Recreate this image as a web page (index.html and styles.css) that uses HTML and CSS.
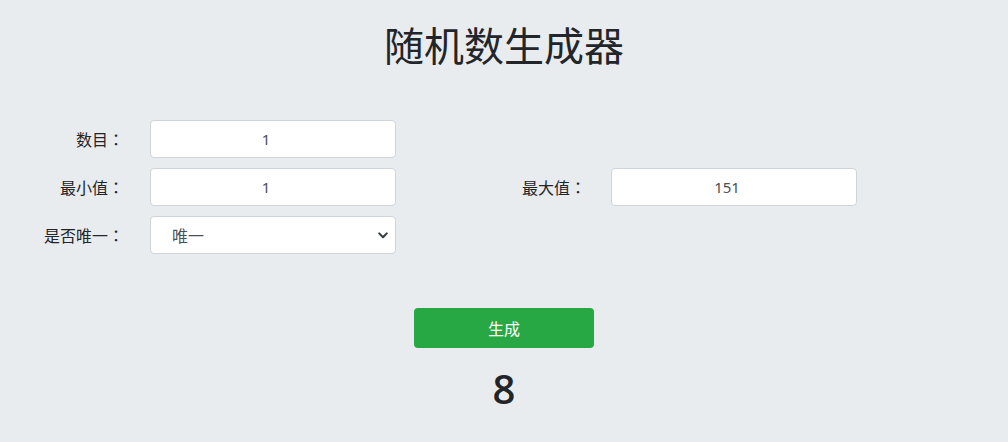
FILE: index.html
```html
<!DOCTYPE html>
<html lang="zh-CN">
<head>
<meta charset="utf-8">
<title>随机数生成器</title>
<link rel="stylesheet" href="styles.css">
</head>
<body>
  <main class="page">
    <h1 class="title">随机数生成器</h1>
    <form class="form-grid">
      <label class="label label-left" for="count">数目<span class="colon">：</span></label>
      <input class="field num" id="count" type="text" value="1">
      <span class="spacer"></span>
      <span class="spacer"></span>

      <label class="label label-left" for="min">最小值<span class="colon">：</span></label>
      <input class="field num" id="min" type="text" value="1">
      <label class="label label-right" for="max">最大值<span class="colon">：</span></label>
      <input class="field num" id="max" type="text" value="151">

      <label class="label label-left" for="unique">是否唯一<span class="colon">：</span></label>
      <div class="select-wrap">
        <select class="field select" id="unique">
          <option>唯一</option>
          <option>不唯一</option>
        </select>
        <svg class="chevron" width="10" height="7" viewBox="0 0 10 7" aria-hidden="true">
          <path d="M1.2 1.4 L5 5.2 L8.8 1.4" fill="none" stroke="#343a40" stroke-width="2" stroke-linecap="round" stroke-linejoin="round"/>
        </svg>
      </div>
    </form>
    <div class="actions">
      <button class="btn" type="button">生成</button>
    </div>
    <div class="result">8</div>
  </main>
</body>
</html>
```
FILE: styles.css
```css
html, body {
  margin: 0;
  padding: 0;
}
body {
  background: #e9ecef;
  color: #212529;
  font-family: "Noto Sans", "Noto Sans CJK SC", sans-serif;
  font-size: 16px;
}
.page {
  padding-top: 20px;
}
.title {
  margin: 0;
  text-align: center;
  font-family: "Noto Sans CJK SC", sans-serif;
  font-size: 40px;
  font-weight: 400;
  line-height: 48px;
  color: #222529;
}
.form-grid {
  margin-top: 52px;
  display: grid;
  grid-template-columns: 150px 246px 215px 246px;
  grid-auto-rows: 38px;
  row-gap: 10px;
}
.label {
  display: flex;
  align-items: center;
  justify-content: flex-end;
  font-family: "Noto Sans CJK SC", sans-serif;
  font-size: 16px;
  color: #212529;
}
.colon {
  font-family: "Noto Sans CJK TC", sans-serif;
}
.label-left {
  padding-right: 26px;
}
.label-right {
  padding-right: 25px;
}
.field {
  box-sizing: border-box;
  width: 246px;
  height: 38px;
  margin: 0;
  border: 1px solid #ced4da;
  border-radius: 4px;
  background: #fff;
  color: #495057;
  font-family: "Noto Sans", "Noto Sans CJK SC", sans-serif;
  font-size: 15px;
  text-align: center;
  outline: none;
}
.num {
  padding: 0 14px 0 0;
}
.select-wrap {
  position: relative;
  width: 246px;
  height: 38px;
}
.select {
  appearance: none;
  -webkit-appearance: none;
  text-align: left;
  padding: 0 30px 0 21px;
  font-family: "Noto Sans CJK SC", sans-serif;
  font-size: 16px;
  color: #495057;
}
.chevron {
  position: absolute;
  right: 8px;
  top: 16px;
  pointer-events: none;
}
.actions {
  margin-top: 54px;
  display: flex;
  justify-content: center;
}
.btn {
  width: 180px;
  height: 40px;
  border: none;
  border-radius: 4px;
  background: #28a745;
  color: #fff;
  font-family: "Noto Sans CJK SC", sans-serif;
  font-size: 16px;
  cursor: pointer;
}
.result {
  margin-top: 17px;
  text-align: center;
  font-family: "Open Sans", "Noto Sans", sans-serif;
  font-size: 40px;
  font-weight: 600;
  line-height: 48px;
  color: #212529;
}
```
